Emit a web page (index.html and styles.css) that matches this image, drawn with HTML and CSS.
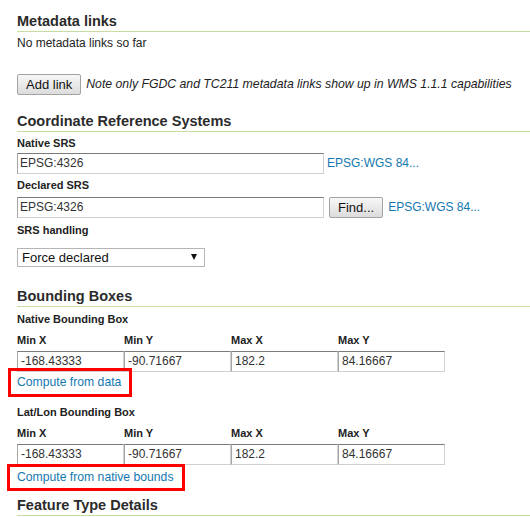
FILE: index.html
```html
<!DOCTYPE html>
<html>
<head>
<meta charset="utf-8">
<link rel="stylesheet" href="styles.css">
</head>
<body>
<div class="page">
  <section class="sec">
    <h2 class="sec-title t-meta">Metadata links</h2>
    <p class="plain empty-msg">No metadata links so far</p>
    <div class="btn-row add-row">
      <button class="btn" type="button">Add link</button>
      <span class="note">Note only FGDC and TC211 metadata links show up in WMS 1.1.1 capabilities</span>
    </div>
  </section>

  <section class="sec">
    <h2 class="sec-title t-crs">Coordinate Reference Systems</h2>
    <label class="field-label l-native">Native SRS</label>
    <div class="field-row r-native">
      <input class="txt srs" type="text" value="EPSG:4326">
      <a class="link" href="#">EPSG:WGS 84...</a>
    </div>
    <label class="field-label l-declared">Declared SRS</label>
    <div class="field-row r-declared">
      <input class="txt srs" type="text" value="EPSG:4326">
      <button class="btn find" type="button">Find...</button>
      <a class="link" href="#">EPSG:WGS 84...</a>
    </div>
    <label class="field-label l-handling">SRS handling</label>
    <div class="select-wrap">
      <select class="sel">
        <option>Force declared</option>
      </select>
      <svg class="sel-arrow" width="6" height="6" viewBox="0 0 6 6"><polygon points="0,0 6,0 3,6" fill="#111"/></svg>
    </div>
  </section>

  <section class="sec">
    <h2 class="sec-title t-bbox">Bounding Boxes</h2>
    <label class="field-label l-nbb">Native Bounding Box</label>
    <div class="bbox">
      <span class="col-label">Min X</span>
      <span class="col-label">Min Y</span>
      <span class="col-label">Max X</span>
      <span class="col-label">Max Y</span>
      <input class="txt" type="text" value="-168.43333">
      <input class="txt" type="text" value="-90.71667">
      <input class="txt" type="text" value="182.2">
      <input class="txt" type="text" value="84.16667">
    </div>
    <div class="compute c-data"><a class="link hl hl-data" href="#">Compute from data</a></div>

    <label class="field-label l-llbb">Lat/Lon Bounding Box</label>
    <div class="bbox">
      <span class="col-label">Min X</span>
      <span class="col-label">Min Y</span>
      <span class="col-label">Max X</span>
      <span class="col-label">Max Y</span>
      <input class="txt" type="text" value="-168.43333">
      <input class="txt" type="text" value="-90.71667">
      <input class="txt" type="text" value="182.2">
      <input class="txt" type="text" value="84.16667">
    </div>
    <div class="compute c-native"><a class="link hl hl-native" href="#">Compute from native bounds</a></div>
  </section>

  <section class="sec">
    <h2 class="sec-title t-ftd">Feature Type Details</h2>
  </section>
</div>
</body>
</html>
```

FILE: styles.css
```css
html, body {
  margin: 0;
  padding: 0;
  background: #fff;
}
body {
  font-family: "Liberation Sans", Arial, sans-serif;
  font-size: 12px;
  color: #222;
  overflow: hidden;
}
.page {
  padding-left: 17px;
}
.sec {
  display: flex;
  flex-direction: column;
  align-items: flex-start;
}
.sec-title {
  align-self: stretch;
  margin: 0;
  font-size: 14.5px;
  line-height: 18px;
  font-weight: bold;
  color: #2b2b2b;
  padding-bottom: 1px;
  border-bottom: 1px solid #c6dca1;
}
.t-meta { margin-top: 12px; }
.t-crs { margin-top: 17px; }
.t-bbox { margin-top: 20px; }
.t-ftd { margin-top: 11px; }

.plain {
  margin: 0;
  line-height: 15px;
}
.empty-msg { margin-top: 4px; }

.btn-row {
  display: flex;
  align-items: center;
  gap: 5px;
  height: 21px;
}
.add-row { margin-top: 23px; }

.btn {
  box-sizing: border-box;
  height: 21px;
  margin: 0;
  padding: 0 8px;
  font-family: "Liberation Sans", Arial, sans-serif;
  font-size: 13px;
  color: #111;
  background: linear-gradient(#f7f7f7, #dcdcdc);
  border: 1px solid #a3a3a3;
  border-radius: 2px;
  line-height: 19px;
}
.note {
  font-style: italic;
  font-size: 12.25px;
  line-height: 15px;
  color: #222;
}

.field-label {
  display: block;
  font-size: 11px;
  font-weight: bold;
  line-height: 14px;
  color: #222;
}
.l-native { margin-top: 4px; }
.l-declared { margin-top: 4px; }
.l-handling { margin-top: 5px; }
.l-nbb { margin-top: 5px; }
.l-llbb { margin-top: 15px; }

.field-row {
  display: flex;
  align-items: center;
  height: 21px;
}
.r-native { margin-top: 3px; gap: 3px; }
.r-declared { margin-top: 5px; gap: 5px; }

.txt {
  box-sizing: border-box;
  height: 21px;
  margin: 0;
  padding: 0 2px 2px 2px;
  font-family: "Liberation Sans", Arial, sans-serif;
  font-size: 12px;
  color: #333;
  background: #fff;
  border: 1px solid;
  border-color: #7b7b7b #d0d0d0 #d0d0d0 #a6a6a6;
  border-radius: 0;
  outline: none;
}
.srs { width: 307px; }

.link {
  color: #1478b0;
  text-decoration: none;
  line-height: 15px;
}

.select-wrap {
  position: relative;
  margin-top: 11px;
  width: 188px;
  height: 19px;
}
.sel {
  appearance: none;
  -webkit-appearance: none;
  box-sizing: border-box;
  width: 188px;
  height: 19px;
  margin: 0;
  padding: 0 0 0 4px;
  font-family: "Liberation Sans", Arial, sans-serif;
  font-size: 13px;
  color: #111;
  background: #fff;
  border: 1px solid #b5b5b5;
  border-radius: 0;
  outline: none;
}
.sel-arrow {
  position: absolute;
  right: 8px;
  top: 6px;
}

.bbox {
  display: grid;
  grid-template-columns: repeat(4, 107px);
  row-gap: 4px;
  margin-top: 7px;
}
.col-label {
  font-size: 11px;
  font-weight: bold;
  line-height: 14px;
  color: #222;
}
.bbox .txt {
  width: 107px;
  padding-left: 3px;
}

.compute {
  line-height: 15px;
}
.compute .link {
  font-size: 12.2px;
}
.c-data { margin-top: 3px; }
.c-native { margin-top: 5px; }

.hl {
  position: relative;
  display: inline-block;
}
.hl::after {
  content: "";
  position: absolute;
  box-sizing: border-box;
  border: 3px solid #f00;
}
.hl-data::after {
  left: -9px;
  top: -7px;
  width: 124px;
  height: 29px;
}
.hl-native::after {
  left: -10px;
  top: -6px;
  width: 178px;
  height: 27px;
}
```
